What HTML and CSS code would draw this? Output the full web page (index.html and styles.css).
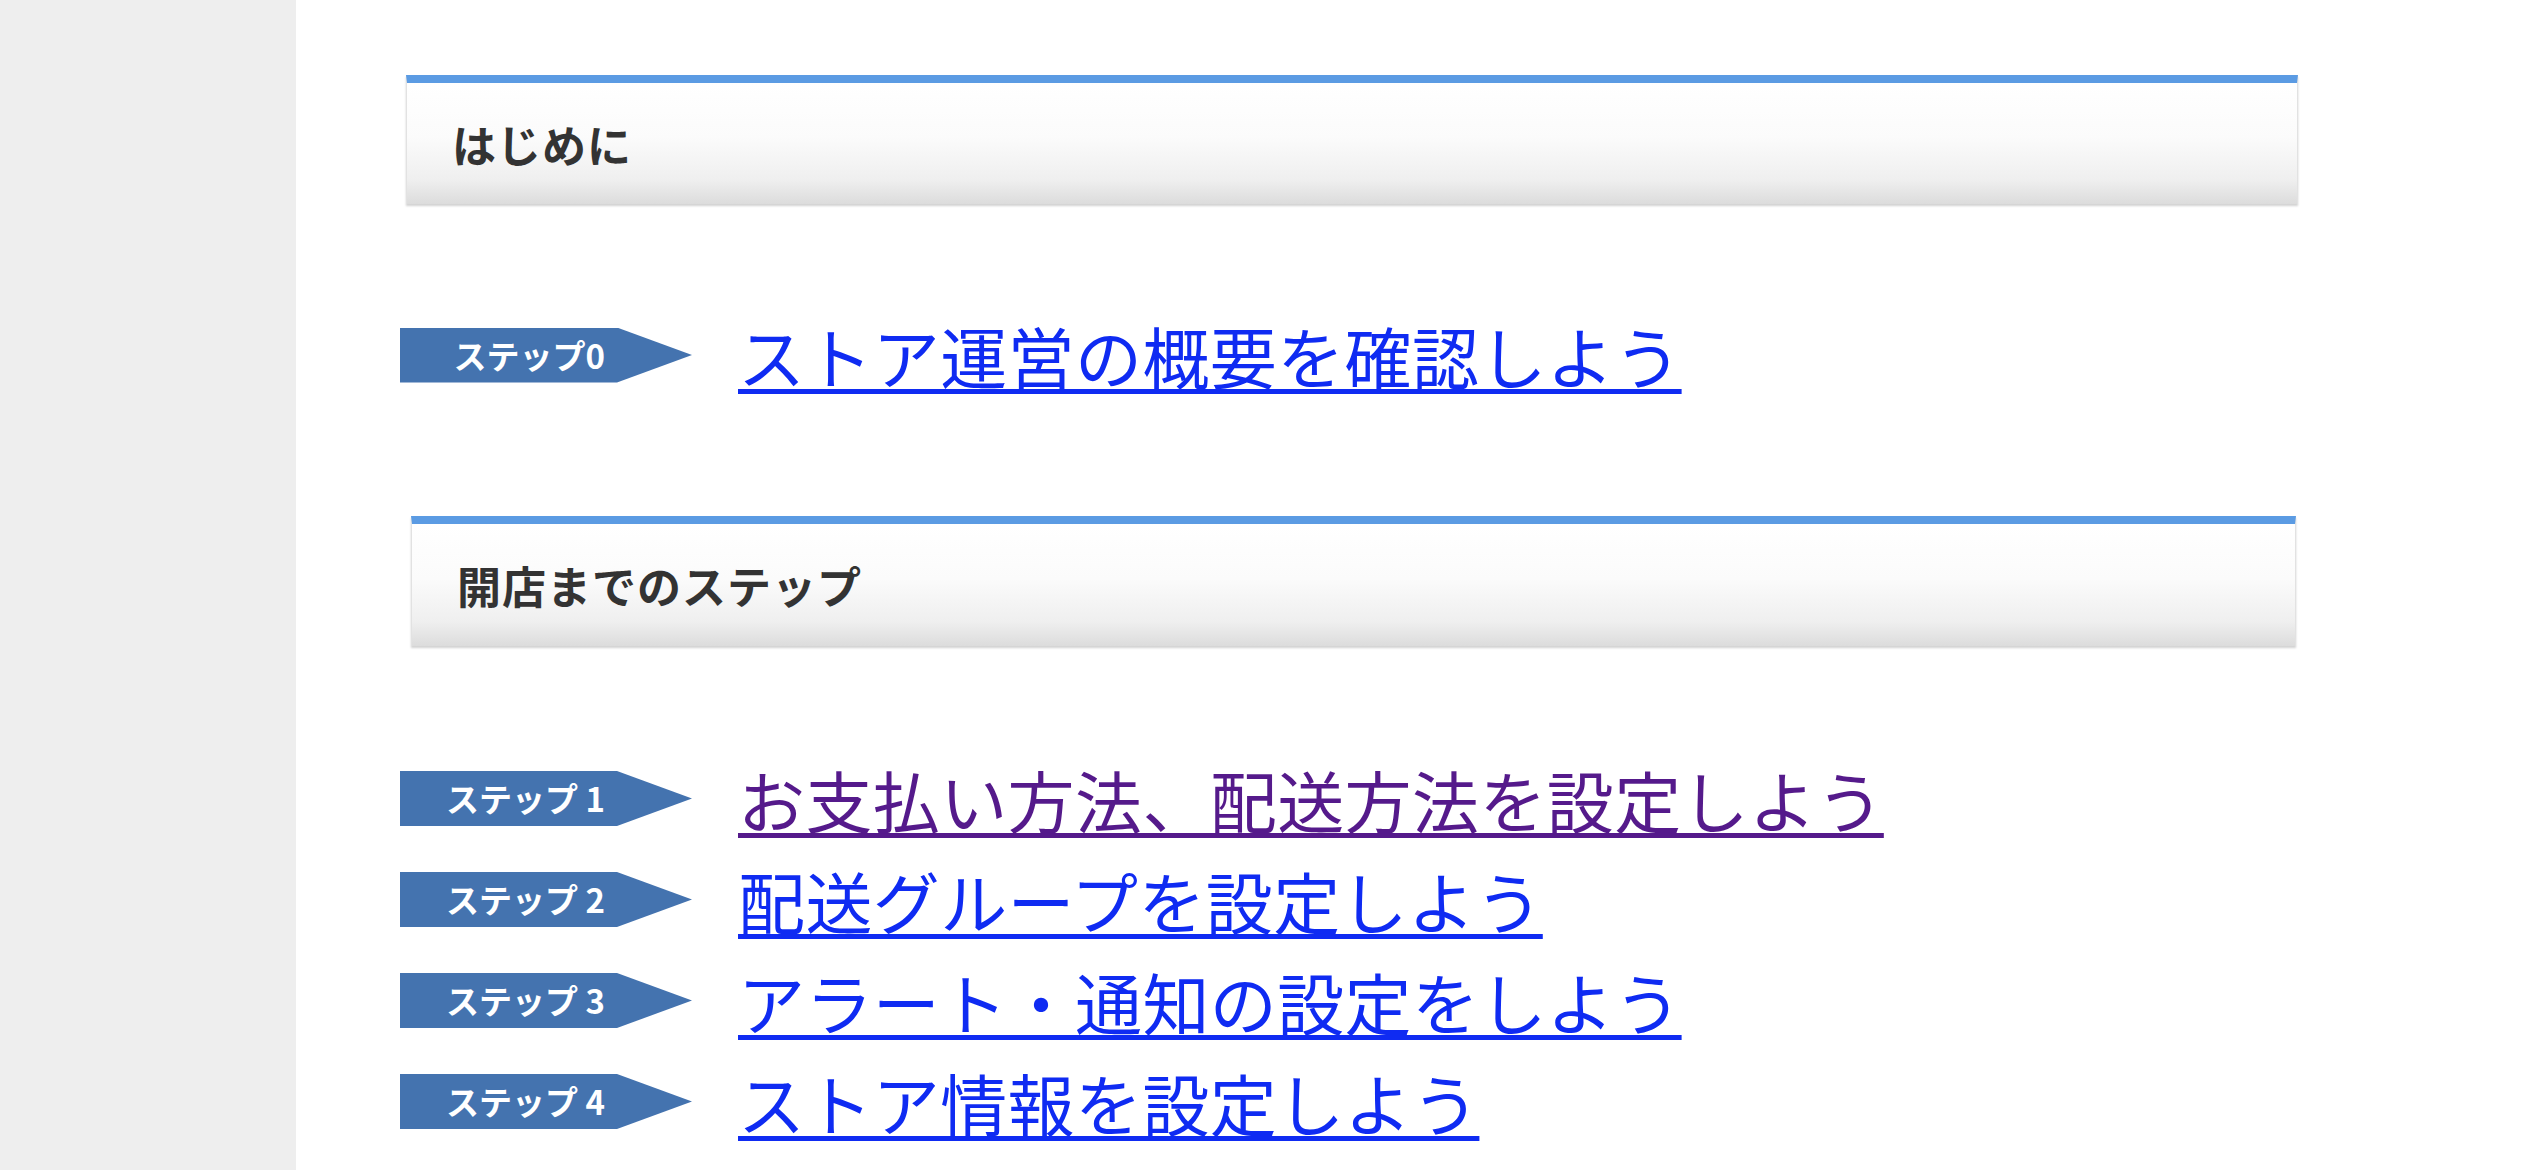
FILE: index.html
```html
<!DOCTYPE html>
<html lang="ja">
<head>
<meta charset="utf-8">
<title>開店までのステップ</title>
<link rel="stylesheet" href="styles.css">
</head>
<body>
<div class="layout">
  <aside class="sidebar"></aside>
  <main class="content">
    <h2 class="section-head">はじめに</h2>
    <ul class="steps steps--intro">
      <li class="step"><span class="badge"><span class="badge-label">ステップ0</span></span><a class="step-link" href="#s0">ストア運営の概要を確認しよう</a></li>
    </ul>
    <h2 class="section-head section-head--second">開店までのステップ</h2>
    <ul class="steps steps--main">
      <li class="step"><span class="badge"><span class="badge-label">ステップ 1</span></span><a class="step-link step-link--visited" href="#s1">お支払い方法、配送方法を設定しよう</a></li>
      <li class="step"><span class="badge"><span class="badge-label">ステップ 2</span></span><a class="step-link" href="#s2">配送グループを設定しよう</a></li>
      <li class="step"><span class="badge"><span class="badge-label">ステップ 3</span></span><a class="step-link" href="#s3">アラート・通知の設定をしよう</a></li>
      <li class="step"><span class="badge"><span class="badge-label">ステップ 4</span></span><a class="step-link" href="#s4">ストア情報を設定しよう</a></li>
      <li class="step"><span class="badge"><span class="badge-label">ステップ 5</span></span><a class="step-link" href="#s5">商品を登録しよう</a></li>
    </ul>
  </main>
</div>
</body>
</html>
```

FILE: styles.css
```css
html {
  overflow: hidden;
}
body {
  margin: 0;
  background: #ffffff;
  font-family: "Noto Sans CJK JP", "Noto Sans", sans-serif;
}
.layout {
  display: flex;
  min-height: 100vh;
}
.sidebar {
  flex: 0 0 296px;
  background: #eeeeee;
}
.content {
  flex: 1;
  padding: 75px 0 0 104px;
}
.section-head {
  box-sizing: border-box;
  width: 1892px;
  height: 129px;
  margin: 0 0 0 6px;
  padding-left: 45px;
  display: flex;
  align-items: center;
  border-top: 8px solid #5b9be3;
  border-left: 1px solid #e2e2e2;
  border-right: 1px solid #e2e2e2;
  background: linear-gradient(#ffffff 0%, #fbfbfb 45%, #efefef 80%, #dcdcdc 100%);
  box-shadow: 0 2px 2px rgba(0, 0, 0, 0.18);
  color: #333333;
  font-size: 44px;
  font-weight: 700;
  letter-spacing: 1px;
}
.section-head--second {
  width: 1885px;
  height: 130px;
  margin-left: 11px;
}
.steps {
  list-style: none;
  margin: 0;
  padding: 0;
}
.steps--intro {
  margin: 101px 0 111px;
}
.steps--main {
  margin-top: 102px;
}
.step {
  height: 101px;
  display: flex;
  align-items: center;
  gap: 46px;
}
.steps--intro .step {
  height: 100px;
}
.badge {
  flex: 0 0 292px;
  height: 55px;
  background: #4473af;
  clip-path: polygon(0 0, 217px 0, 292px 50%, 217px 100%, 0 100%);
  display: flex;
  align-items: center;
}
.badge-label {
  box-sizing: border-box;
  width: 217px;
  padding-right: 12px;
  text-align: right;
  color: #ffffff;
  font-size: 33px;
  font-weight: 700;
  white-space: pre;
  line-height: 1;
}
.step-link {
  font-size: 67px;
  letter-spacing: 0.4px;
  line-height: 100px;
  color: #0f2bf2;
  text-decoration: underline;
  text-decoration-thickness: 5px;
  text-underline-offset: 5px;
  white-space: nowrap;
}
.step-link--visited {
  color: #551a8b;
}
```
